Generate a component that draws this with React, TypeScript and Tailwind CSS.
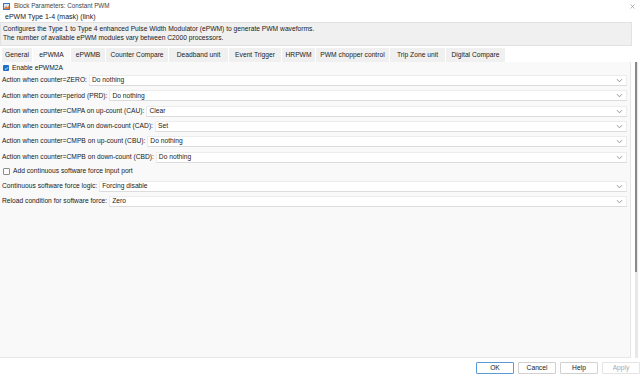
import { X } from "lucide-react";

const tabs = [
  { label: "General", w: "w-[31px]" },
  { label: "ePWMA", w: "w-[38px]", active: true },
  { label: "ePWMB", w: "w-[35px]" },
  { label: "Counter Compare", w: "w-[63px]" },
  { label: "Deadband unit", w: "w-[60px]" },
  { label: "Event Trigger", w: "w-[53px]" },
  { label: "HRPWM", w: "w-[34px]" },
  { label: "PWM chopper control", w: "w-[74px]" },
  { label: "Trip Zone unit", w: "w-[56px]" },
  { label: "Digital Compare", w: "w-[60px]" },
];

function Chevron() {
  return (
    <svg width="7" height="5" viewBox="0 0 7 5" className="shrink-0">
      <path d="M1 1.2 L3.5 3.8 L6 1.2" fill="none" stroke="#8a8a8a" strokeWidth="0.9" />
    </svg>
  );
}

function SelectRow({ label, value }: { label: string; value: string }) {
  return (
    <div className="flex h-[15.3px] items-center">
      <span className="shrink-0 whitespace-nowrap pl-[2px] pr-[2px]">{label}</span>
      <div className="flex h-[11px] flex-1 items-center justify-between border border-[#ececec] border-b-[#dcdcdc] bg-white pl-[2px] pr-[3px]">
        <span>{value}</span>
        <Chevron />
      </div>
    </div>
  );
}

function Check({ on }: { on?: boolean }) {
  return on ? (
    <span className="flex h-[6px] w-[6px] items-center justify-center rounded-[1px] bg-[#1f6fc5]">
      <svg width="5" height="5" viewBox="0 0 5 5">
        <path d="M0.9 2.6 L2 3.6 L4.1 1.2" fill="none" stroke="white" strokeWidth="0.8" />
      </svg>
    </span>
  ) : (
    <span className="h-[7px] w-[7px] rounded-[1px] border border-[#8c8c8c] bg-white" />
  );
}

function Btn({ label, primary, disabled }: { label: string; primary?: boolean; disabled?: boolean }) {
  return (
    <div
      className={`flex h-[12px] w-[38px] items-center justify-center rounded-[1px] border bg-white ${
        primary ? "border-[#5b9bd5]" : "border-[#d0d0d0]"
      } ${disabled ? "border-[#e4e4e4] bg-[#f7f7f7] text-[#a8a8a8]" : "text-[#1a1a1a]"}`}
    >
      {label}
    </div>
  );
}

export default function App() {
  return (
    <div
      className="flex h-[374px] w-[640px] flex-col overflow-hidden bg-white text-[6.7px] leading-none text-[#1a1a1a]"
      style={{ fontFamily: '"Liberation Sans", Arial, sans-serif' }}
    >
      {/* title bar */}
      <div className="flex h-[12px] shrink-0 items-center justify-between pl-[3px] pr-[4px]">
        <div className="flex items-center gap-[4px]">
          <svg width="7" height="7" viewBox="0 0 7 7">
            <rect x="0" y="0" width="7" height="7" fill="#3a78c2" />
            <rect x="1" y="1" width="5" height="5" fill="#d9e8f7" />
            <path d="M1 5.5 L3 3 L4.5 4.5 L6 2.5 V6 H1Z" fill="#e07b39" />
          </svg>
          <span className="text-[6.3px] text-[#444]">Block Parameters: Constant PWM</span>
        </div>
        <X size={7} strokeWidth={1.4} color="#555" />
      </div>

      {/* mask name */}
      <div className="flex h-[9px] shrink-0 items-center pl-[5px] text-[7px]">ePWM Type 1-4 (mask) (link)</div>

      {/* description */}
      <div className="mr-[8px] mt-[1px] flex h-[24px] shrink-0 flex-col justify-center gap-[2.5px] border border-[#e2e2e2] bg-[#f0f0f0] pl-[2px]">
        <span>Configures the Type 1 to Type 4 enhanced Pulse Width Modulator (ePWM) to generate PWM waveforms.</span>
        <span>The number of available ePWM modules vary between C2000 processors.</span>
      </div>

      {/* tabs */}
      <div className="mt-[2px] flex h-[14px] shrink-0 items-end pl-[2px]">
        {tabs.map((t) => (
          <div
            key={t.label}
            className={`flex h-[14px] items-center justify-center whitespace-nowrap border-r border-white ${t.w} ${
              t.active ? "bg-[#f9f9f9]" : "bg-[#f0f0f0]"
            }`}
          >
            {t.label}
          </div>
        ))}
      </div>

      {/* content + scrollbar */}
      <div className="flex h-[296px] shrink-0">
        <div className="flex flex-1 flex-col border-r border-b border-[#e6e6e6] bg-[#f9f9f9] pr-[3px]">
          <div className="flex h-[11px] items-center gap-[3px] pl-[3px] pt-[1px]">
            <Check on />
            <span>Enable ePWM2A</span>
          </div>
          <SelectRow label="Action when counter=ZERO:" value="Do nothing" />
          <SelectRow label="Action when counter=period (PRD):" value="Do nothing" />
          <SelectRow label="Action when counter=CMPA on up-count (CAU):" value="Clear" />
          <SelectRow label="Action when counter=CMPA on down-count (CAD):" value="Set" />
          <SelectRow label="Action when counter=CMPB on up-count (CBU):" value="Do nothing" />
          <SelectRow label="Action when counter=CMPB on down-count (CBD):" value="Do nothing" />
          <div className="flex h-[14px] items-center gap-[3px] pl-[3px]">
            <Check />
            <span>Add continuous software force input port</span>
          </div>
          <SelectRow label="Continuous software force logic:" value="Forcing disable" />
          <SelectRow label="Reload condition for software force:" value="Zero" />
        </div>
        <div className="flex w-[9px] justify-end pr-[2px]">
          <div className="flex w-[3px] flex-col bg-[#e8e8e8]">
            <div className="h-[210px] w-[2px] bg-[#8a8a8a]" />
          </div>
        </div>
      </div>

      {/* buttons */}
      <div className="flex flex-1 items-end justify-end gap-[4px] pr-0">
        <Btn label="OK" primary />
        <Btn label="Cancel" />
        <Btn label="Help" />
        <Btn label="Apply" disabled />
      </div>
    </div>
  );
}
